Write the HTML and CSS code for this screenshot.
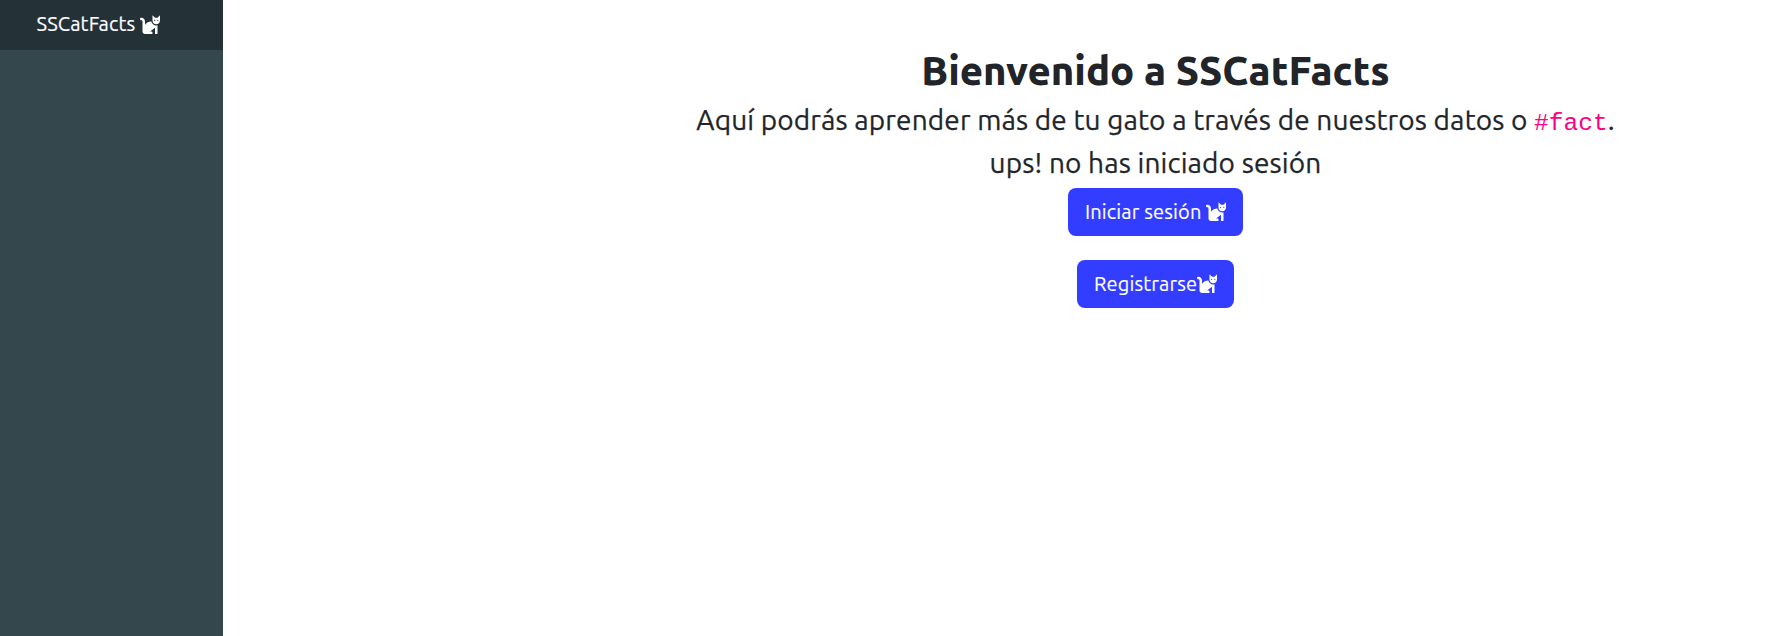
FILE: index.html
```html
<!DOCTYPE html>
<html lang="es">
<head>
<meta charset="utf-8">
<title>SSCatFacts</title>
<link rel="stylesheet" href="styles.css">
</head>
<body>
<svg width="0" height="0" class="sprite" aria-hidden="true">
  <symbol id="cat" viewBox="0 0 512 512"><path d="M290.59 192c-20.18 0-106.82 1.98-162.59 85.95V192c0-52.94-43.06-96-96-96-17.67 0-32 14.33-32 32s14.33 32 32 32c17.64 0 32 14.36 32 32v256c0 35.3 28.7 64 64 64h176c8.84 0 16-7.16 16-16v-16c0-17.67-14.33-32-32-32h-32l128-96v144c0 8.84 7.16 16 16 16h32c8.84 0 16-7.16 16-16V289.86c-10.29 2.67-20.89 4.54-32 4.54-61.81 0-113.52-44.05-125.41-102.4zM448 96h-64l-64-64v134.4c0 53.02 42.98 96 96 96s96-42.98 96-96V32l-64 64zm-72 80c-8.84 0-16-7.16-16-16s7.16-16 16-16 16 7.16 16 16-7.16 16-16 16zm80 0c-8.84 0-16-7.16-16-16s7.16-16 16-16 16 7.16 16 16-7.16 16-16 16z"/></symbol>
</svg>
<div class="layout">
  <aside class="sidebar">
    <a class="brand"><span class="brand-text">SSCatFacts</span><svg class="icon"><use href="#cat"/></svg></a>
  </aside>
  <main class="content">
    <h1 class="title">Bienvenido a SSCatFacts</h1>
    <p class="lead">Aquí podrás aprender más de tu gato a través de nuestros datos o <code>#fact</code>.</p>
    <p class="lead">ups! no has iniciado sesión</p>
    <a class="btn btn-login"><span class="login-text">Iniciar sesión</span><svg class="icon"><use href="#cat"/></svg></a>
    <a class="btn btn-register"><span class="register-text">Registrarse</span><svg class="icon"><use href="#cat"/></svg></a>
  </main>
</div>
</body>
</html>
```
FILE: styles.css
```css
* { box-sizing: border-box; }
body {
  margin: 0;
  font-family: Ubuntu, "Noto Sans", sans-serif;
  font-weight: 400;
  color: #212529;
  background: #fff;
}
.sprite { display: none; }
.layout { display: flex; height: 636px; }
.sidebar { width: 223px; flex: none; background: #33474d; }
.brand {
  display: flex;
  align-items: center;
  height: 50px;
  padding: 0 0 3px 36.5px;
  background: #243238;
  color: #fff;
  font-size: 20px;
  letter-spacing: 0.15px;
  -webkit-text-stroke: 0.2px currentColor;
}
.brand-text { width: 103px; white-space: nowrap; }
.icon { width: 20px; height: 20px; flex: none; fill: currentColor; }
.content {
  flex: 1;
  display: flex;
  flex-direction: column;
  align-items: center;
  padding: 47px 0 0 302px;
  white-space: nowrap;
}
.title { margin: 0 0 4px; font-size: 40px; line-height: 48px; font-weight: 780; }
.lead {
  margin: 0;
  font-size: 28px;
  line-height: 42px;
  height: 43px;
  letter-spacing: 0.13px;
  -webkit-text-stroke: 0.25px currentColor;
}
.lead code {
  font-family: "Liberation Mono", monospace;
  font-size: 24.5px;
  line-height: 1;
  letter-spacing: 0;
  color: #ff0084;
  -webkit-text-stroke: 0;
}
.btn {
  display: flex;
  align-items: center;
  height: 48px;
  padding-bottom: 2px;
  border-radius: 8px;
  background: #333dff;
  color: #fff;
  font-size: 20px;
  letter-spacing: 0.15px;
  -webkit-text-stroke: 0.15px currentColor;
}
.btn-login { width: 175px; margin-top: 3px; padding-left: 17px; }
.login-text { width: 121px; }
.btn-register { width: 157px; margin-top: 24px; padding-left: 17px; }
.register-text { width: 103px; }
```
